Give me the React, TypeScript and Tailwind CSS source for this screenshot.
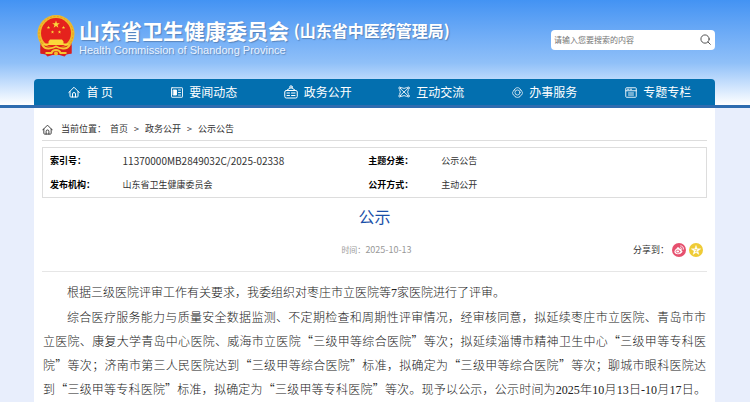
import type { ReactNode } from 'react'

const stroke = {
  fill: 'none',
  stroke: 'currentColor',
  strokeLinecap: 'round' as const,
  strokeLinejoin: 'round' as const,
}

function HomeIcon({ className }: { className: string }) {
  return (
    <svg viewBox="0 0 24 24" className={className} {...stroke} strokeWidth="2" aria-hidden="true">
      <path d="M1.5 13 12 2.5 22.5 13M4 11v9.500a1.500 1.500 0 0 0 1.500 1.500h13a1.500 1.500 0 0 0 1.500-1.500V11" />
      <path d="M9 22v-6a3 3 0 0 1 6 0v6" />
    </svg>
  )
}

function NewsIcon() {
  return (
    <svg viewBox="0 0 24 22" className="h-[11px] w-3" {...stroke} strokeWidth="1.8" aria-hidden="true">
      <rect x="1" y="1.500" width="22" height="19" rx="1" />
      <path d="M5 6h6v10H5z" fill="currentColor" />
      <path d="M15 6h4M15 11h4M15 16h4" />
    </svg>
  )
}

function BoardIcon() {
  return (
    <svg viewBox="0 0 28 28" className="size-[14px]" {...stroke} strokeWidth="2" aria-hidden="true">
      <circle cx="14" cy="4" r="2.500" />
      <path d="m12 6-7 5M16 6l7 5" />
      <rect x="1.500" y="11" width="25" height="15" rx="3" />
      <path d="M6 16h5M15 16h7M6 21h5M15 21h7" />
    </svg>
  )
}

function ExchangeIcon() {
  return (
    <svg viewBox="0 0 24 24" className="size-3" {...stroke} strokeWidth="1.7" aria-hidden="true">
      <circle cx="3.500" cy="4" r="2" />
      <circle cx="20.500" cy="4" r="2" />
      <circle cx="3.500" cy="20" r="2" />
      <circle cx="20.500" cy="20" r="2" />
      <path d="M5 5.500 19 18.500M19 5.500 5 18.500M7 3.500q5 3 10 0M7 20.500q5-3 10 0M3.500 8q3 4 0 8M20.500 8q-3 4 0 8" />
    </svg>
  )
}

function ServiceIcon() {
  return (
    <svg viewBox="0 0 24 24" className="size-[11px]" {...stroke} strokeWidth="1.6" aria-hidden="true">
      <circle cx="12" cy="12" r="5.500" />
      <path d="M6 5C8 0 16 0 18 5M20 8c4 1 4 8 0 10M4 8c-4 1-4 8 0 10M7 21c2 2.500 8 2.500 10 0" />
      <path d="M6 5 4 8M18 5l2 3M7 21l-3-3M17 21l3-3" />
    </svg>
  )
}

function TopicIcon() {
  return (
    <svg viewBox="0 0 24 22" className="h-[11px] w-3" {...stroke} strokeWidth="1.800" aria-hidden="true">
      <path d="M1.500 7.500V3a1.500 1.500 0 0 1 1.500-1.500h18A1.500 1.500 0 0 1 22.500 3v16a1.500 1.500 0 0 1-1.500 1.500H3A1.500 1.500 0 0 1 1.500 19V7.500h21" />
      <path d="M5 4.500h3M11 4.500h2M7 12h10M7 16h10" />
    </svg>
  )
}

const star = (cx: number, cy: number, r: number) =>
  Array.from({ length: 10 }, (_, i) => {
    const d = i % 2 ? r * 0.4 : r
    const a = (Math.PI * i) / 5 - Math.PI / 2
    return `${cx + d * Math.cos(a)},${cy + d * Math.sin(a)}`
  }).join(' ')

function Emblem() {
  return (
    <svg viewBox="0 0 76 84" className="h-[42px] w-[38px] shrink-0" role="img" aria-label="国徽">
      <path d="M7 52 7 77l10 2 4 4 10-3h14l10 3 4-4 10-2V52z" fill="#dd1f1f" />
      <circle cx="38" cy="37" r="37" fill="#f0b92b" />
      <circle cx="38" cy="37" r="34" fill="none" stroke="#d99a1d" strokeWidth="1.500" strokeDasharray="4 3" />
      <circle cx="38" cy="36" r="30" fill="#e5221d" />
      <g fill="#fbd83b">
        <polygon points={star(38, 19, 8)} />
        <polygon points={star(23, 25, 3.6)} />
        <polygon points={star(53, 25, 3.6)} />
        <polygon points={star(31, 34, 3.6)} />
        <polygon points={star(45, 34, 3.6)} />
        <path d="M26 49h24l3 4v4h10v3H13v-3h10v-4z" />
      </g>
      <path d="M7 60q31 8 62 0v17H7z" fill="#d81e1e" />
      <path d="M10 59q5 9 14 8t14-4q5 3 14 4t14-8" fill="none" stroke="#f6c832" strokeWidth="4" />
      <path d="M17 76h12q2-6 9-6t9 6h12" fill="none" stroke="#f6c832" strokeWidth="4" />
      <circle cx="38" cy="77" r="4" fill="#f3bd2d" />
    </svg>
  )
}

const navItems: { label: string; icon: ReactNode }[] = [
  { label: '首 页', icon: <HomeIcon className="size-3" /> },
  { label: '要闻动态', icon: <NewsIcon /> },
  { label: '政务公开', icon: <BoardIcon /> },
  { label: '互动交流', icon: <ExchangeIcon /> },
  { label: '办事服务', icon: <ServiceIcon /> },
  { label: '专题专栏', icon: <TopicIcon /> },
]

function Num({ children }: { children: ReactNode }) {
  return <span className="font-['Liberation_Serif',serif]">{children}</span>
}

export default function App() {
  return (
    <div
      lang="zh-CN"
      className="min-h-screen bg-[#e8eefc] font-['Noto_Sans_CJK_SC',sans-serif] text-[9px] text-[#333]"
    >
      <header className="border-b-3 border-[#2e6cb0] bg-linear-to-b from-[#4393f3] via-[#90c0f8] via-60% to-white pr-[35px] pl-[34px]">
        <div className="flex h-[79px] items-center justify-between pl-[3px]">
          <div className="flex items-center gap-1 pb-2">
            <Emblem />
            <div className="flex items-start gap-1 text-white [text-shadow:1px_1px_1px_rgba(60,90,130,0.5)]">
              <div>
                <h1 className="text-[21px] leading-7 font-bold whitespace-nowrap">山东省卫生健康委员会</h1>
                <p className="pr-1 font-['Liberation_Sans',sans-serif] text-[11px] leading-3 text-[#eaf3ff] [text-align-last:justify]">
                  Health Commission of Shandong Province
                </p>
              </div>
              <span className="text-base leading-7 font-bold whitespace-nowrap">(山东省中医药管理局)</span>
            </div>
          </div>
          <form className="flex h-5 w-[164px] items-center rounded bg-white pr-1 pl-[3px]">
            <input
              type="text"
              aria-label="搜索"
              placeholder="请输入您要搜索的内容"
              className="min-w-0 flex-1 text-[8px] outline-none placeholder:text-[#757575]"
            />
            <button type="button" aria-label="搜索" className="text-[#444]">
              <svg viewBox="0 0 24 24" className="size-[11px]" {...stroke} strokeWidth="2" aria-hidden="true">
                <circle cx="11" cy="11" r="9" />
                <path d="m17.500 17.500 5 5" />
              </svg>
            </button>
          </form>
        </div>
        <nav className="grid h-[26px] grid-cols-6 rounded-t bg-[#036faf] text-xs text-white">
          {navItems.map((item) => (
            <a key={item.label} href="#" className="flex items-center justify-center gap-1.5 whitespace-nowrap">
              {item.icon}
              {item.label}
            </a>
          ))}
        </nav>
      </header>

      <main className="mr-[35px] ml-[34px] min-h-[294px] bg-white px-2 pt-3">
        <div className="flex h-[21px] items-center gap-2 border-b border-[#ddd] pb-0.5">
          <HomeIcon className="size-[11px]" />
          <span className="-mr-1">当前位置：</span>
          <nav className="flex gap-1.5" aria-label="当前位置">
            <a href="#">首页</a>
            <span>&gt;</span>
            <a href="#">政务公开</a>
            <span>&gt;</span>
            <a href="#">公示公告</a>
          </nav>
        </div>

        <table className="mt-1.5 w-full table-fixed border border-[#ddd] text-left">
          <tbody>
            <tr className="h-[25px]">
              <th scope="row" className="w-[11%] pl-[7px] font-bold text-black">索引号：</th>
              <td className="w-[37%] pl-[7px] text-[10px]">11370000MB2849032C/2025-02338</td>
              <th scope="row" className="w-[11%] pl-[7px] font-bold text-black">主题分类：</th>
              <td className="pl-[7px]">公示公告</td>
            </tr>
            <tr className="h-[25px]">
              <th scope="row" className="pl-[7px] font-bold text-black">发布机构：</th>
              <td className="pl-[7px]">山东省卫生健康委员会</td>
              <th scope="row" className="pl-[7px] font-bold text-black">公开方式：</th>
              <td className="pl-[7px]">主动公开</td>
            </tr>
          </tbody>
        </table>

        <h2 className="mt-1.5 text-center text-base leading-6 text-[#1a4fa8]">公示</h2>

        <div className="mt-2.5 grid h-[34px] grid-cols-3 items-start border-b border-[#e6e6e6] pt-1">
          <p className="col-start-2 pl-1 text-center leading-4 text-[#999]">
            <span className="text-[8px]">时间：</span>2025-10-13
          </p>
          <div className="flex items-center justify-end gap-[3px] pr-1 leading-4">
            <span>分享到：</span>
            <a href="#" aria-label="分享到微博" className="flex size-[14px] items-center justify-center rounded-full bg-[#e6506e] text-white">
              <svg viewBox="0 0 24 24" className="size-[10px]" {...stroke} strokeWidth="2" aria-hidden="true">
                <path
                  d="M9 7c2-1 4 0 3 3 4-1 6 0 5 3 3 1 3 4 0 6-4 3-13 3-15-1C1 14 5 9 9 7Z"
                  fill="currentColor"
                />
                <ellipse cx="9.500" cy="15.500" rx="4.500" ry="3.500" stroke="#e6506e" />
                <path d="M15 6c3 0 4 2 4 4M16 2c5 0 7 4 7 8" />
              </svg>
            </a>
            <a href="#" aria-label="分享到QQ空间" className="flex size-[14px] items-center justify-center rounded-full bg-[#efcb35] text-white">
              <svg viewBox="0 0 24 24" className="size-[10px]" aria-hidden="true">
                <polygon points={star(12, 13, 12)} fill="currentColor" stroke="currentColor" strokeLinejoin="round" />
                <path d="M9 11h6l-5 5h5" {...stroke} stroke="#efcb35" strokeWidth="1.500" />
              </svg>
            </a>
          </div>
        </div>

        <article className="mt-2 px-px text-xs leading-6 font-light text-[#222] whitespace-nowrap">
          <p className="indent-[2em]">
            根据三级医院评审工作有关要求，我委组织对枣庄市立医院等<Num>7</Num>家医院进行了评审。
          </p>
          <p className="indent-[2em] [text-align-last:justify]">
            综合医疗服务能力与质量安全数据监测、不定期检查和周期性评审情况，经审核同意，拟延续枣庄市立医院、青岛市市
            <br />
            立医院、康复大学青岛中心医院、威海市立医院“三级甲等综合医院”等次；拟延续淄博市精神卫生中心“三级甲等专科医
            <br />
            院”等次；济南市第三人民医院达到“三级甲等综合医院”标准，拟确定为“三级甲等综合医院”等次；聊城市眼科医院达
            <br />
            到“三级甲等专科医院”标准，拟确定为“三级甲等专科医院”等次。现予以公示，公示时间为<Num>2025</Num>年
            <Num>10</Num>月<Num>13</Num>日<Num>-10</Num>月<Num>17</Num>日。
          </p>
        </article>
      </main>
    </div>
  )
}
